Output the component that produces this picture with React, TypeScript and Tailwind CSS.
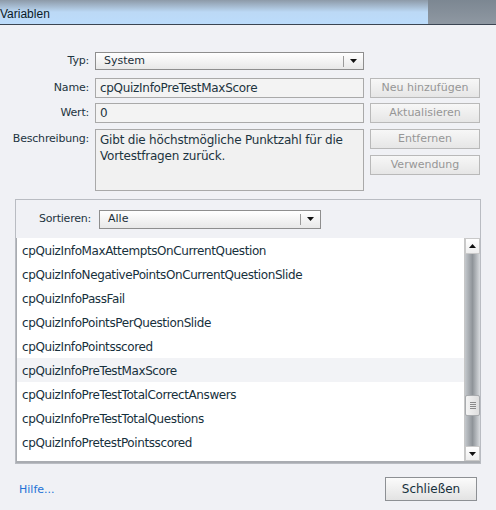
import React from "react";

const items = [
  "cpQuizInfoMaxAttemptsOnCurrentQuestion",
  "cpQuizInfoNegativePointsOnCurrentQuestionSlide",
  "cpQuizInfoPassFail",
  "cpQuizInfoPointsPerQuestionSlide",
  "cpQuizInfoPointsscored",
  "cpQuizInfoPreTestMaxScore",
  "cpQuizInfoPreTestTotalCorrectAnswers",
  "cpQuizInfoPreTestTotalQuestions",
  "cpQuizInfoPretestPointsscored",
  "cpQuizInfoPretestScorePercentage",
];

function Arrow({ up }: { up?: boolean }) {
  return (
    <svg width="7" height="4" viewBox="0 0 7 4">
      <path d={up ? "M0 4 L3.5 0 L7 4 Z" : "M0 0 L7 0 L3.5 4 Z"} fill="#111" />
    </svg>
  );
}

function Select({ value, className }: { value: string; className: string }) {
  return (
    <div
      className={`flex items-center border border-[#8e8e8e] bg-gradient-to-b from-white to-[#e8e8e8] ${className}`}
    >
      <span className="flex-1 pl-[8px] text-[11px] text-[#1b2f3a]">{value}</span>
      <span className="h-[11px] w-px bg-[#9a9a9a]" />
      <span className="flex w-[19px] justify-center">
        <Arrow />
      </span>
    </div>
  );
}

function DisabledButton({ label, className = "" }: { label: string; className?: string }) {
  return (
    <div
      className={`flex h-[20px] w-[110px] items-center justify-center border border-[#b9b9b9] bg-gradient-to-b from-[#f7f7f7] to-[#e6e6e6] text-[11px] text-[#969696] ${className}`}
    >
      {label}
    </div>
  );
}

export default function App() {
  return (
    <div
      className="h-[510px] w-[496px] overflow-hidden bg-[#f0f1f5] text-[#1d3440]"
      style={{ fontFamily: '"DejaVu Sans", Verdana, sans-serif' }}
    >
      {/* title bar */}
      <div className="flex h-[25px] border-b border-[#3b4552]">
        <div className="flex w-[428px] items-end bg-gradient-to-b from-[#8d9aa8] via-[#bcd9f5] to-[#bcdcfb] pb-[4px]">
          <span
            className="text-[12px] leading-none text-[#0b1a26]"
            style={{ fontFamily: '"Liberation Sans", Arial, sans-serif' }}
          >
            Variablen
          </span>
        </div>
        <div className="flex-1 bg-gradient-to-b from-[#7c8792] to-[#8f98a2]" />
      </div>

      {/* form */}
      <div className="flex pt-[27px]">
        <div className="flex w-[89px] flex-col items-end text-[11px] tracking-[-0.2px]">
          <div className="flex h-[18px] items-center">Typ:</div>
          <div className="mt-[8px] flex h-[20px] items-center">Name:</div>
          <div className="mt-[5px] flex h-[20px] items-center">Wert:</div>
          <div className="mt-[6px] flex h-[20px] items-center">Beschreibung:</div>
        </div>
        <div className="ml-[6px] flex w-[269px] flex-col">
          <Select value="System" className="h-[18px]" />
          <div className="mt-[8px] flex h-[20px] items-center border border-[#a9a9a9] bg-[#f3f3f3] px-[4px] text-[12px] tracking-[-0.3px]">
            cpQuizInfoPreTestMaxScore
          </div>
          <div className="mt-[5px] flex h-[20px] items-center border border-[#a9a9a9] bg-[#f3f3f3] px-[4px] text-[12px]">
            0
          </div>
          <div className="mt-[6px] h-[62px] border border-[#a9a9a9] bg-[#f1f1f1] px-[4px] pt-[2px] text-[12px] leading-[16px] tracking-[-0.2px]">
            Gibt die höchstmögliche Punktzahl für die Vortestfragen zurück.
          </div>
        </div>
        <div className="ml-[6px] flex flex-col pt-[26px]">
          <DisabledButton label="Neu hinzufügen" />
          <DisabledButton label="Aktualisieren" className="mt-[5px]" />
          <DisabledButton label="Entfernen" className="mt-[6px]" />
          <DisabledButton label="Verwendung" className="mt-[6px]" />
        </div>
      </div>

      {/* list panel */}
      <div className="ml-[15px] mt-[8px] flex h-[265px] w-[466px] flex-col border border-[#b9bcc2]">
        <div className="flex h-[38px] items-center">
          <span className="ml-[23px] w-[59px] text-[11px] tracking-[-0.2px]">Sortieren:</span>
          <Select value="Alle" className="ml-[1px] h-[19px] w-[222px]" />
        </div>
        <div className="flex flex-1 overflow-hidden border-b-2 border-l border-[#a9acb1] bg-white">
          <div className="flex-1 overflow-hidden">
            {items.map((it, i) => (
              <div
                key={it}
                className={`flex h-[24px] items-center pl-[5px] pt-[1px] text-[12px] tracking-[-0.4px] text-[#17303c] ${
                  i === 5 ? "bg-[#f2f3f6]" : ""
                }`}
              >
                {it}
              </div>
            ))}
          </div>
          {/* scrollbar */}
          <div className="flex w-[16px] flex-col border-l border-[#c7c7c7] bg-white">
            <div className="flex h-[16px] items-center justify-center border border-[#c9c9c9] bg-gradient-to-b from-white to-[#eeeeee]">
              <Arrow up />
            </div>
            <div className="flex flex-1 flex-col bg-gradient-to-r from-[#c4c8cc] via-[#8f9499] to-[#d9dcdf]">
              <div className="h-[141px]" />
              <div className="flex h-[21px] flex-col items-center justify-center gap-[1px] rounded-[2px] border border-[#a8abae] bg-gradient-to-r from-[#f4f4f4] to-[#dedede]">
                <span className="h-px w-[6px] bg-[#8a8a8a]" />
                <span className="h-px w-[6px] bg-[#8a8a8a]" />
                <span className="h-px w-[6px] bg-[#8a8a8a]" />
                <span className="h-px w-[6px] bg-[#8a8a8a]" />
              </div>
            </div>
            <div className="flex h-[15px] items-center justify-center border border-[#c9c9c9] bg-gradient-to-b from-white to-[#eeeeee]">
              <Arrow />
            </div>
          </div>
        </div>
      </div>

      {/* footer */}
      <div className="flex items-center pl-[19px] pr-[19px] pt-[13px]">
        <span className="pt-[3px] text-[11px] text-[#2471d6]">Hilfe...</span>
        <div className="ml-auto flex h-[24px] w-[92px] items-center justify-center border border-[#8d9094] bg-gradient-to-b from-[#fbfbfb] to-[#e3e3e3] text-[12px] text-[#17303c]">
          Schließen
        </div>
      </div>
    </div>
  );
}
